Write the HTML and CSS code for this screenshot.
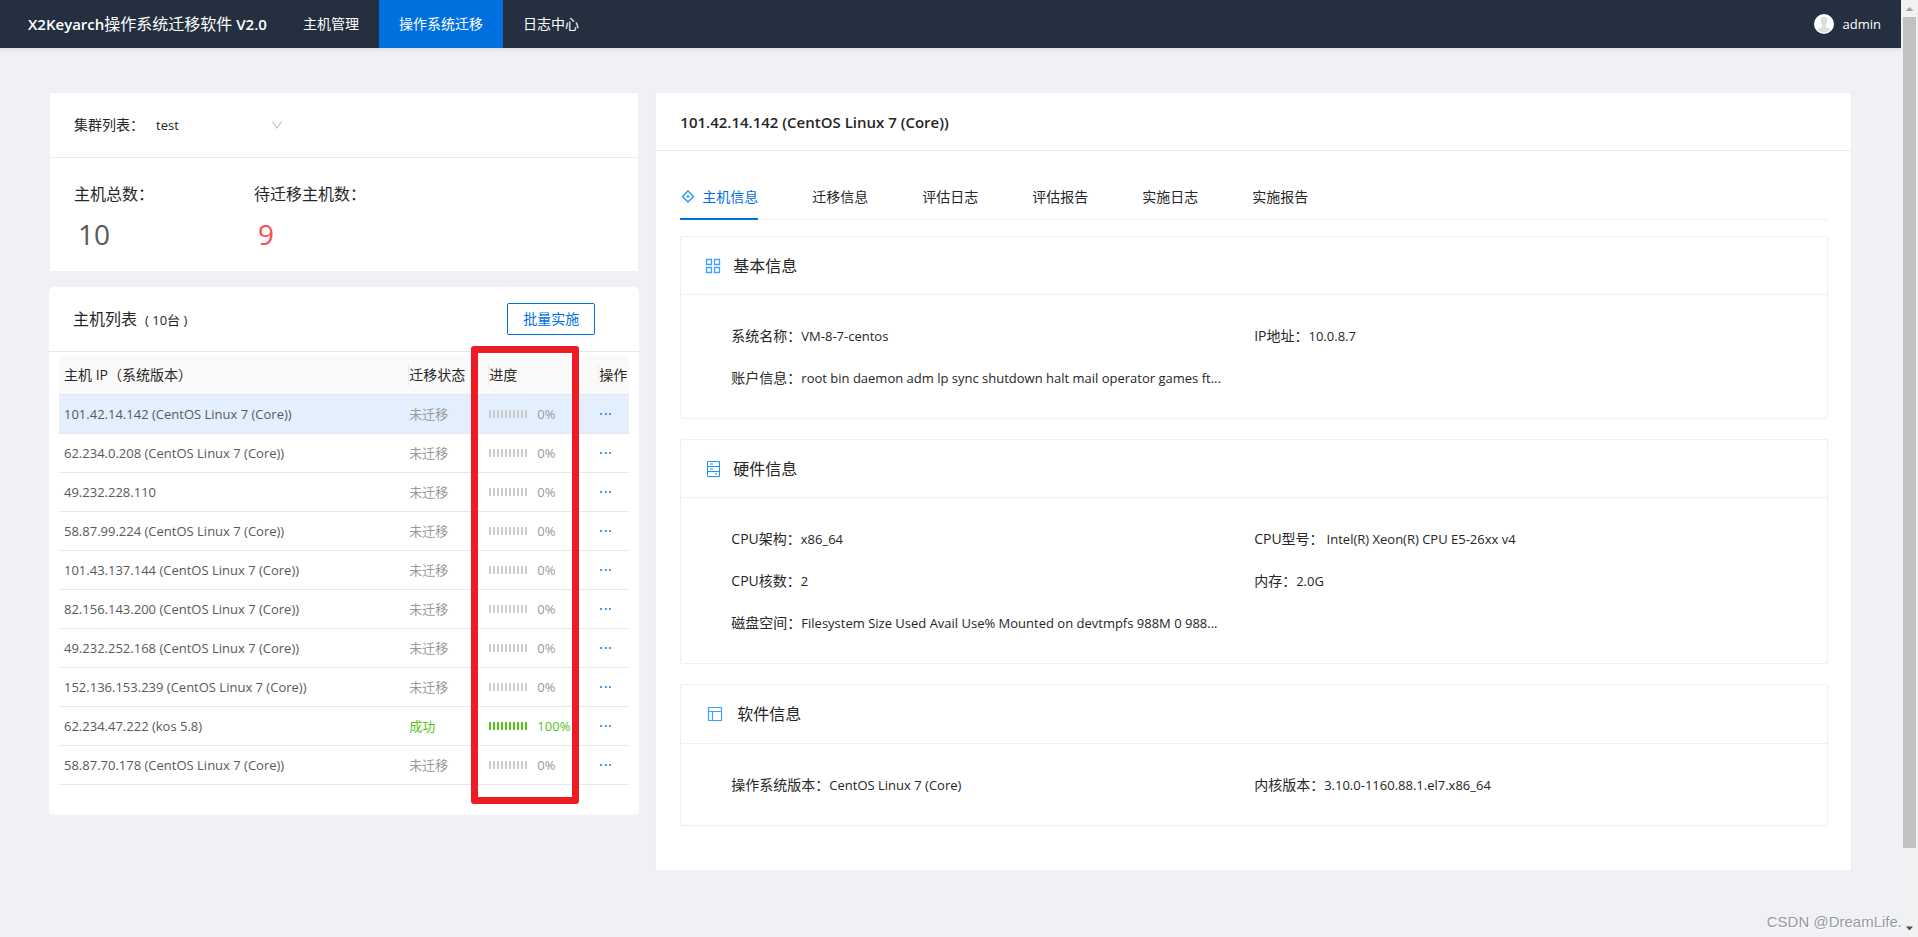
FILE: index.html
```html
<!DOCTYPE html>
<html lang="zh-CN">
<head>
<meta charset="utf-8">
<title>X2Keyarch操作系统迁移软件 V2.0</title>
<link rel="stylesheet" href="styles.css">
</head>
<body>
<div class="window">
  <div class="app">
    <header class="topbar">
      <h1 class="brand">X2Keyarch<span class="brand-cn">操作系统迁移软件</span> V2.0</h1>
      <nav class="nav">
        <a class="nav-item" href="#hosts">主机管理</a>
        <a class="nav-item active" href="#migrate">操作系统迁移</a>
        <a class="nav-item" href="#logs">日志中心</a>
      </nav>
      <a class="user" href="#user">
        <svg class="avatar" viewBox="0 0 20 20" aria-hidden="true"><circle cx="10" cy="10" r="10" fill="#fff"/><path d="M6.600 5.500Q7 3 10 3t3.400 2.500Q13.600 9 12 11.200v1.600q1 .8 3.500 1.700 1.200.6 1 1.800-2.600 2.400-6.500 2.400T3.500 16.300q-.2-1.200 1-1.800Q7 13.600 8 12.800v-1.600Q6.400 9 6.600 5.500z" fill="#dcdfe1"/></svg>
        <span>admin</span>
      </a>
    </header>

    <main class="content">
      <section class="side">
        <div class="card summary">
          <div class="cluster">
            <label for="cluster">集群列表：</label>
            <div class="select-wrap">
              <select id="cluster"><option>test</option></select>
              <svg class="chevron" viewBox="0 0 12 12" aria-hidden="true"><path d="M1.500 2.500L6 9l4.500-6.500" fill="none" stroke="#bfbfbf" stroke-width="1.200"/></svg>
            </div>
          </div>
          <dl class="stats">
            <div class="stat"><dt>主机总数：</dt><dd>10</dd></div>
            <div class="stat"><dt>待迁移主机数：</dt><dd class="pending">9</dd></div>
          </dl>
        </div>

        <div class="hosts">
          <div class="hosts-head">
            <h2>主机列表<small>( 10台 )</small></h2>
            <button class="batch" type="button">批量实施</button>
          </div>
          <div class="table-wrap">
            <table class="host-table">
              <colgroup><col><col class="c-state"><col class="c-progress"><col class="c-action"></colgroup>
              <thead><tr><th>主机 IP（系统版本）</th><th><span>迁移状态</span></th><th><span>进度</span></th><th><span>操作</span></th></tr></thead>
              <tbody id="rows"></tbody>
            </table>
          </div>
          <div class="marker"></div>
        </div>
      </section>

      <section class="card detail">
        <h2 class="detail-title">101.42.14.142 (CentOS Linux 7 (Core))</h2>
        <div class="detail-body">
          <nav class="tabs">
            <a class="tab active" href="#info"><svg class="tab-icon" viewBox="0 0 15 15" aria-hidden="true"><path d="M8 2L13.500 7.500 8 13 2.500 7.500z" fill="none" stroke="#1890ff" stroke-width="1.300"/><circle cx="8" cy="7.500" r="1.200" fill="#1890ff"/></svg>主机信息</a>
            <a class="tab" href="#migration">迁移信息</a>
            <a class="tab" href="#assess-log">评估日志</a>
            <a class="tab" href="#assess-report">评估报告</a>
            <a class="tab" href="#run-log">实施日志</a>
            <a class="tab" href="#run-report">实施报告</a>
          </nav>

          <article class="panel">
            <h3><svg class="icon" viewBox="0 0 16 16" aria-hidden="true"><path d="M1.500 1.500h5v5h-5zM9.500 1.500h5v5h-5zM1.500 9.500h5v5h-5zM9.500 9.500h5v5h-5z" fill="none" stroke="#40a0ff" stroke-width="1.300"/></svg>基本信息</h3>
            <div class="fields">
              <p>系统名称：<span>VM-8-7-centos</span></p>
              <p>IP地址：<span>10.0.8.7</span></p>
              <p>账户信息：<span>root bin daemon adm lp sync shutdown halt mail operator games ft...</span></p>
            </div>
          </article>

          <article class="panel">
            <h3><svg class="icon" viewBox="0 0 16 16" aria-hidden="true"><path d="M2.500 .5h12v15h-12zM2.500 5.500h12M2.500 10.500h12" fill="none" stroke="#1890ff"/><path d="M5 3h3M5 8h3M10 13h2" stroke="#1890ff" stroke-width="1.200"/></svg>硬件信息</h3>
            <div class="fields">
              <p>CPU架构：<span>x86_64</span></p>
              <p>CPU型号：<span class="spaced">Intel(R) Xeon(R) CPU E5-26xx v4</span></p>
              <p>CPU核数：<span>2</span></p>
              <p>内存：<span>2.0G</span></p>
              <p>磁盘空间：<span>Filesystem Size Used Avail Use% Mounted on devtmpfs 988M 0 988...</span></p>
            </div>
          </article>

          <article class="panel software">
            <h3><svg class="icon" viewBox="0 0 16 16" aria-hidden="true"><path d="M1.500 1.500h13v13h-13zM1.500 5.500h13M5.500 5.500v9" fill="none" stroke="#40a0ff" stroke-width="1.200"/></svg>软件信息</h3>
            <div class="fields">
              <p>操作系统版本：<span>CentOS Linux 7 (Core)</span></p>
              <p>内核版本：<span>3.10.0-1160.88.1.el7.x86_64</span></p>
            </div>
          </article>
        </div>
      </section>
    </main>
  </div>

  <div class="scrollbar" aria-hidden="true">
    <svg viewBox="0 0 17 17"><path d="M4.500 11L8.500 7l4 4z" fill="#a3a3a3"/></svg>
    <div class="track"><div class="thumb"></div></div>
    <svg viewBox="0 0 17 17"><path d="M5 6.500h7L8.500 10.500z" fill="#505050"/></svg>
  </div>
  <div class="watermark">CSDN @DreamLife.</div>
</div>
<script src="hosts.js"></script>
</body>
</html>
```
FILE: styles.css
```css
* { box-sizing: border-box; }

body {
  margin: 0;
  font-family: "Open Sans", "Noto Sans CJK SC", sans-serif;
  font-size: 14px;
  line-height: 22px;
  color: #262626;
  background: #f0f1f5;
}

h1, h2, h3, p, dl, dt, dd { margin: 0; font-weight: 400; }
a { color: inherit; text-decoration: none; }

.window { position: relative; display: flex; min-height: 100vh; }
.app { flex: 1; min-width: 0; }

.topbar {
  display: flex;
  height: 48px;
  padding: 0 20px 0 28px;
  color: #fff;
  background: #242f40;
  box-shadow: 0 1px 4px rgba(0, 21, 41, .12);
  line-height: 48px;
}
.brand { min-width: 255px; font-size: 15px; font-weight: 600; line-height: 48px; white-space: nowrap; }
.brand-cn { font-size: 16px; font-weight: 400; }
.nav { display: flex; flex: 1; }
.nav-item { padding: 0 20px; }
.nav-item.active { background: #0070e0; }
.user { display: flex; align-items: center; gap: 9px; font-size: 13px; }
.avatar { width: 20px; height: 20px; }

.content {
  display: grid;
  grid-template-columns: calc((100% + 16px) / 3 - 16px) minmax(0, 1fr);
  gap: 16px;
  align-items: start;
  padding: 44px 49px;
}
.side { display: grid; gap: 15px; }
.card { background: #fff; border: 1px solid #eeeff2; }

.cluster {
  display: flex;
  align-items: center;
  height: 65px;
  padding: 0 24px;
  border-bottom: 1px solid #ececee;
}
.select-wrap { position: relative; width: 140px; }
.cluster select {
  width: 100%;
  height: 32px;
  padding: 0 12px;
  border: 0;
  background: none;
  appearance: none;
  font: inherit;
  font-size: 13px;
  color: inherit;
}
.chevron { position: absolute; top: 10px; right: 1px; width: 12px; height: 12px; pointer-events: none; }

.stats { display: flex; height: 113px; padding: 24px; }
.stat { width: 180px; font-size: 16px; }
.stat dt { line-height: 24px; }
.stat dd { padding: 8px 4px; font-size: 28px; line-height: 40px; color: #595959; }
.stat dd.pending { color: #ff4d4f; }

.hosts { position: relative; border-radius: 5px; padding-bottom: 30px; background: #fff; }
.hosts-head {
  display: flex;
  align-items: center;
  justify-content: space-between;
  height: 65px;
  padding: 0 44px 0 24px;
  border-bottom: 1px solid #e6e7f0;
}
.hosts-head h2 { font-size: 16px; }
.hosts-head small { margin-left: 8px; font-size: 13px; }
.batch {
  width: 88px;
  height: 32px;
  padding: 0;
  border: 1px solid #0070e0;
  border-radius: 2px;
  background: #fff;
  box-shadow: 0 2px 0 rgba(0, 0, 0, .02);
  font: inherit;
  color: #0070e0;
}
.table-wrap { padding: 4px 10px 0; }
.host-table { width: 100%; table-layout: fixed; border-collapse: separate; border-spacing: 0; }
.c-state { width: 80px; }
.c-progress { width: 110px; }
.c-action { width: 31px; }
.host-table th, .host-table td {
  height: 39px;
  padding: 0;
  border-bottom: 1px solid #e4e5f0;
  text-align: left;
  white-space: nowrap;
}
.host-table th { background: #fafafa; font-weight: 400; }
.host-table th:first-child, .host-table td:first-child { padding-left: 5px; }
.host-table th span { display: block; border-left: 1px solid #ececec; }
.host-table td { padding-left: 1px; font-size: 13px; color: #595959; }
.host-table .selected td { background: #e3effd; }
.host-table td.state, .host-table td.rate { color: #999; }
.host-table .done td.state, .host-table .done td.rate { color: #52c41a; }
.meter { display: flex; align-items: center; gap: 10px; }
.bars {
  width: 38px;
  height: 8px;
  background: repeating-linear-gradient(90deg, #ccc 0 2px, transparent 2px 4px);
}
.done .bars { background: repeating-linear-gradient(90deg, #52c41a 0 2px, transparent 2px 4px); }
.more {
  display: block;
  width: 13px;
  height: 22px;
  padding: 0;
  border: 0;
  background: none;
}
.more svg { display: block; width: 13px; height: 22px; }

.marker {
  position: absolute;
  top: 59px;
  left: 422px;
  width: 108px;
  height: 458px;
  border: 7px solid #ed1c24;
  border-radius: 3px;
}

.detail-title {
  height: 58px;
  padding: 0 24px;
  border-bottom: 1px solid #ececee;
  font-size: 15px;
  font-weight: 600;
  line-height: 58px;
}
.detail-body { padding: 24px 23px 44px 24px; }
.tabs {
  display: flex;
  gap: 54px;
  height: 45px;
  margin-bottom: 16px;
  border-bottom: 1px solid #f0f0f0;
}
.tab { display: flex; align-items: center; gap: 7px; height: 45px; padding-bottom: 2px; }
.tab.active { color: #0070e0; box-shadow: inset 0 -2px #0070e0; }
.tab-icon { width: 15px; height: 15px; }

.panel { border: 1px solid #efefef; border-radius: 2px; }
.panel + .panel { margin-top: 20px; }
.panel h3 {
  display: flex;
  align-items: center;
  gap: 12px;
  height: 58px;
  padding: 0 24px;
  border-bottom: 1px solid #efefef;
  font-size: 16px;
}
.panel .icon { width: 16px; height: 16px; }
.panel.software h3 { gap: 14px; height: 59px; padding: 0 26px; }
.fields { display: grid; grid-template-columns: 1fr 1fr; padding: 20px 50px 19px; }
.fields p { line-height: 42px; white-space: nowrap; }
.fields p:nth-child(odd) { grid-column: 1; }
.fields span { font-size: 13px; }
.fields .spaced { margin-left: 3px; }

.scrollbar { display: flex; flex-direction: column; width: 17px; background: #f1f1f1; }
.scrollbar svg { flex: none; width: 17px; height: 17px; }
.track { flex: 1; padding: 0 2px; }
.thumb { height: 92%; background: #c1c1c1; }

.watermark {
  position: absolute;
  right: 16px;
  bottom: 4px;
  font-family: "Liberation Sans", sans-serif;
  font-size: 15px;
  color: #999a9d;
  text-shadow: 1px 1px 0 #fff;
}
```
FILE: hosts.js
```js
const hosts = [
  ["101.42.14.142 (CentOS Linux 7 (Core))", "未迁移", 0],
  ["62.234.0.208 (CentOS Linux 7 (Core))", "未迁移", 0],
  ["49.232.228.110", "未迁移", 0],
  ["58.87.99.224 (CentOS Linux 7 (Core))", "未迁移", 0],
  ["101.43.137.144 (CentOS Linux 7 (Core))", "未迁移", 0],
  ["82.156.143.200 (CentOS Linux 7 (Core))", "未迁移", 0],
  ["49.232.252.168 (CentOS Linux 7 (Core))", "未迁移", 0],
  ["152.136.153.239 (CentOS Linux 7 (Core))", "未迁移", 0],
  ["62.234.47.222 (kos 5.8)", "成功", 100],
  ["58.87.70.178 (CentOS Linux 7 (Core))", "未迁移", 0]
];

document.getElementById("rows").innerHTML = hosts.map(([name, state, rate], i) => `
  <tr class="${i === 0 ? "selected" : ""} ${rate === 100 ? "done" : ""}">
    <td>${name}</td>
    <td class="state">${state}</td>
    <td class="rate"><div class="meter"><span class="bars"></span>${rate}%</div></td>
    <td><button class="more" type="button" aria-label="操作"><svg viewBox="0 0 13 22"><path d="M1 10h2v2H1zM6 10h2v2H6zM10 10h2v2h-2z" fill="#4a9bea"/></svg></button></td>
  </tr>`).join("");
```
